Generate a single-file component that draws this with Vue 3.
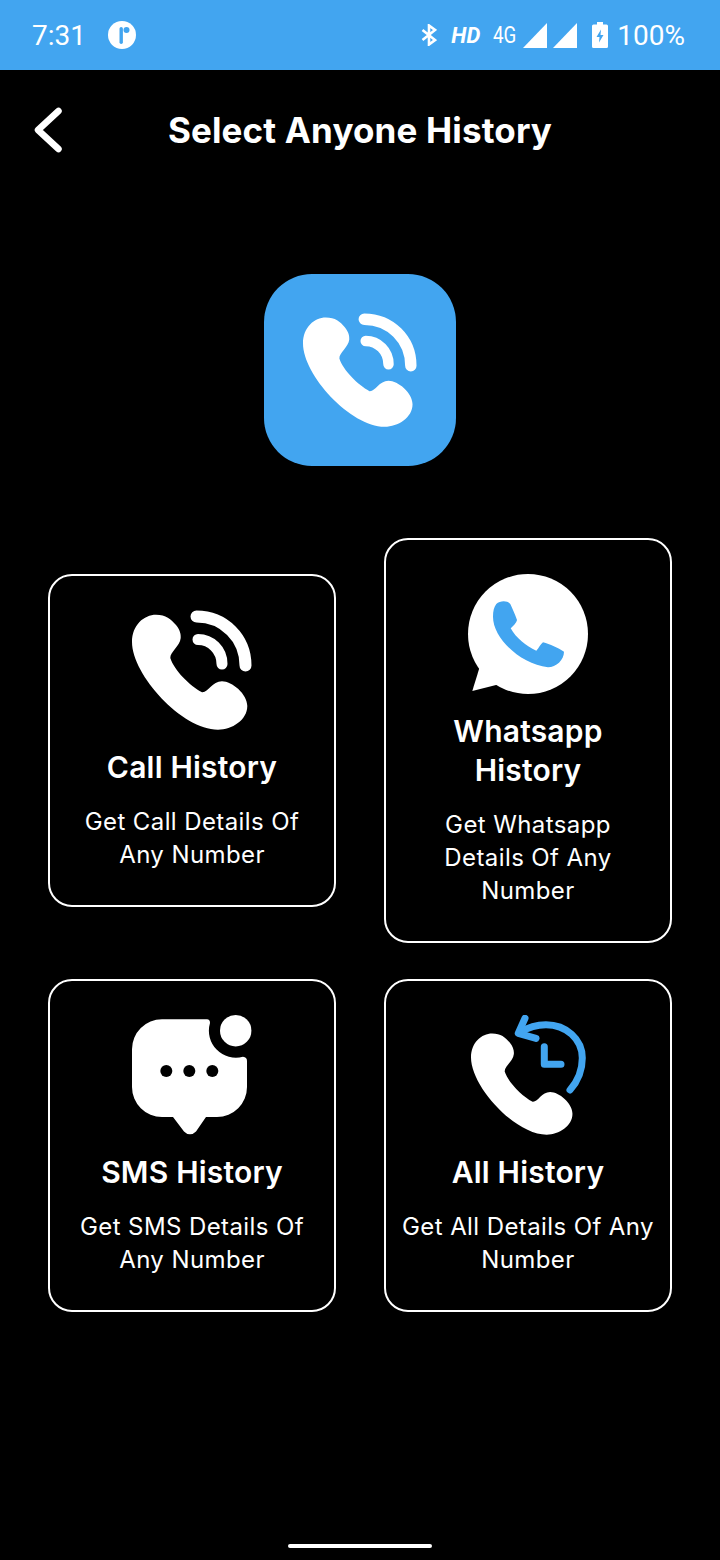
<template>
  <div class="page">
    <div class="status">
      <span class="time">7:31</span>
      <svg class="badge" viewBox="0 0 28 28" width="28" height="28">
        <circle cx="14" cy="14" r="14" fill="#fff" />
        <rect x="11.5" y="6" width="3.4" height="17" rx="1.7" fill="#42a5f0" />
        <circle cx="18.5" cy="9" r="3" fill="#42a5f0" />
      </svg>
      <div class="status-right">
        <svg class="bt" viewBox="0 0 16 22" width="16" height="22">
          <path d="M1.5 6 L14 16 L8 20.5 V1.5 L14 6 L1.5 16" fill="none" stroke="#fff" stroke-width="2.6" />
        </svg>
        <span class="hd">HD</span>
        <span class="net">4G</span>
        <svg class="sig" viewBox="0 0 24 25" width="24" height="25"><path d="M24 0V25H0Z" fill="#fff" /></svg>
        <svg class="sig second" viewBox="0 0 24 25" width="24" height="25"><path d="M24 0V25H0Z" fill="#fff" /></svg>
        <svg class="batt" viewBox="0 0 16 26" width="16" height="26">
          <path fill-rule="evenodd" fill="#fff" d="M5 0H11V2.5H14.5Q16 2.5 16 4V24.5Q16 26 14.5 26H1.5Q0 26 0 24.5V4Q0 2.5 1.5 2.5H5ZM9 7.5 L4.5 15H7.5L7 20.5L11.5 13H8.5Z" />
        </svg>
        <span class="pct">100%</span>
      </div>
    </div>

    <div class="header">
      <svg class="back" viewBox="0 0 28 46" width="28" height="46">
        <path d="M24.5 4 L4 23 L24.5 42" fill="none" stroke="#fff" stroke-width="6.5" stroke-linecap="round" stroke-linejoin="round" />
      </svg>
      <h1 class="title">Select Anyone History</h1>
    </div>

    <div class="logo">
      <svg viewBox="0 0 120 120" width="114" height="114">
        <path fill="#fff" :d="phone" />
        <path fill="none" stroke="#fff" stroke-width="12" stroke-linecap="round" d="M64.5 6.5C92 6.5 113.5 28 113.5 55.5" />
        <path fill="none" stroke="#fff" stroke-width="11" stroke-linecap="round" d="M66 29.5C79 29.5 90 40 90 54" />
      </svg>
    </div>

    <div class="grid">
      <div v-for="card in cards" :key="card.icon" class="card">
        <svg v-if="card.icon === 'call'" class="icon" viewBox="0 0 120 120">
          <path fill="#fff" :d="phone" />
          <path fill="none" stroke="#fff" stroke-width="12" stroke-linecap="round" d="M64.5 6.5C92 6.5 113.5 28 113.5 55.5" />
          <path fill="none" stroke="#fff" stroke-width="11" stroke-linecap="round" d="M66 29.5C79 29.5 90 40 90 54" />
        </svg>
        <svg v-else-if="card.icon === 'whatsapp'" class="icon" viewBox="0 0 120 120">
          <circle cx="60" cy="60" r="60" fill="#fff" />
          <path fill="#fff" d="M4.3 117 L12 92 L32 110Z" />
          <path fill="#42a5f0" d="M28.3 30C32 26.5 39 26 42.3 30C44 34 47 40 49 46C48.5 49 45 52 42.7 54.3C48 64 58 72 68.3 76.7C71 74 72.5 70 75 68.3C82 70 90 74 96 77.7C96 86 88 93.3 80 93.3C52 90 25 64 25 42.7C25 37 26 33 28.3 30Z" />
        </svg>
        <svg v-else-if="card.icon === 'sms'" class="icon" viewBox="0 0 120 120">
          <circle cx="103.7" cy="15.7" r="15.7" fill="#fff" />
          <path fill="#fff" d="M30 4.3H75Q78 4.3 78 8A27 27 0 0 0 111 41.7Q115 42 115 46V72A30 30 0 0 1 85 102H74L64 116.5A8 8 0 0 1 52 116.5L41 102H30A30 30 0 0 1 0 72V34.3A30 30 0 0 1 30 4.3Z" />
          <circle cx="34.3" cy="56" r="6" fill="#000" />
          <circle cx="57.3" cy="56" r="6" fill="#000" />
          <circle cx="80.3" cy="56" r="6" fill="#000" />
        </svg>
        <svg v-else class="icon" viewBox="0 0 120 120">
          <path fill="#fff" :d="phone" transform="translate(3 14.3) scale(.88)" />
          <g fill="none" stroke="#42a5f0" stroke-width="7" stroke-linecap="round" stroke-linejoin="round">
            <path d="M53 17C62 11 70 9.7 78 9.7C98 9.7 114.3 24 114.3 43C114.3 55 110 66 102 75" />
            <path d="M57 3.3L50.3 18.3L68 23.3" />
            <path d="M76.3 31.7V49.3H93" />
          </g>
        </svg>
        <h2 class="card-title">{{ card.title }}</h2>
        <p class="card-desc">
          <span v-for="line in card.lines" :key="line" class="line">{{ line }}</span>
        </p>
      </div>
    </div>

    <div class="home"></div>
  </div>
</template>

<script setup>
const phone = "M24 4.7C34 4.7 39 9 44 15C48 20 49 24 48.7 28C48 36 38 42 38.3 48C42 60 58 76 70 82.3C76 83 80 71.3 90 71.3C100 71.3 115.3 84 115.3 96C115.3 110 100 119.7 86 119.7C50 119.7 0 65 0 32C0 15 12 4.7 24 4.7Z";

const cards = [
  { icon: "call", title: "Call History", lines: ["Get Call Details Of", "Any Number"] },
  { icon: "whatsapp", title: "Whatsapp History", lines: ["Get Whatsapp", "Details Of Any", "Number"] },
  { icon: "sms", title: "SMS History", lines: ["Get SMS Details Of", "Any Number"] },
  { icon: "all", title: "All History", lines: ["Get All Details Of Any", "Number"] },
];
</script>

<style>
html,
body {
  margin: 0;
  background: #000;
}
</style>

<style scoped>
.page {
  width: 720px;
  height: 1560px;
  background: #000;
  color: #fff;
  display: flex;
  flex-direction: column;
  align-items: stretch;
  font-family: Inter, "Liberation Sans", sans-serif;
  overflow: hidden;
}
.status {
  height: 70px;
  background: #42a5f0;
  display: flex;
  align-items: center;
  padding: 0 35px 0 32px;
  box-sizing: border-box;
  font-family: Roboto, sans-serif;
}
.time {
  font-size: 28px;
  width: 76px;
}
.status-right {
  margin-left: auto;
  display: flex;
  align-items: center;
}
.hd {
  font-size: 22px;
  font-weight: 700;
  font-style: italic;
  margin-left: 14px;
}
.net {
  font-size: 24px;
  margin-left: 13px;
  transform: scaleX(0.78);
  transform-origin: left center;
  width: 30px;
}
.second {
  margin-left: 6px;
}
.batt {
  margin-left: 15px;
}
.pct {
  font-size: 28px;
  margin-left: 9px;
}
.header {
  height: 120px;
  display: flex;
  align-items: center;
  justify-content: center;
  position: relative;
}
.back {
  position: absolute;
  left: 34px;
  top: 37px;
}
.title {
  margin: 0;
  font-size: 35px;
  font-weight: 700;
  letter-spacing: 0.15px;
}
.logo {
  width: 192px;
  height: 192px;
  margin: 84px auto 72px;
  border-radius: 48px;
  background: #42a5f0;
  display: flex;
  align-items: center;
  justify-content: center;
}
.grid {
  display: grid;
  grid-template-columns: 288px 288px;
  column-gap: 48px;
  row-gap: 36px;
  padding: 0 48px;
  align-items: center;
}
.card {
  border: 2px solid #fff;
  border-radius: 24px;
  padding: 34px 14px;
  text-align: center;
  box-sizing: border-box;
}
.icon {
  display: block;
  width: 120px;
  height: 120px;
  margin: 0 auto;
}
.card-title {
  margin: 18px 0;
  font-size: 30px;
  font-weight: 600;
  line-height: 39px;
  letter-spacing: 0.2px;
}
.card-desc {
  margin: 0;
  font-size: 24px;
  font-weight: 400;
  line-height: 33px;
  letter-spacing: 0.4px;
}
.line {
  display: block;
  white-space: nowrap;
}
.home {
  width: 144px;
  height: 4px;
  border-radius: 2px;
  background: #fff;
  margin: auto auto 12px;
}
</style>
